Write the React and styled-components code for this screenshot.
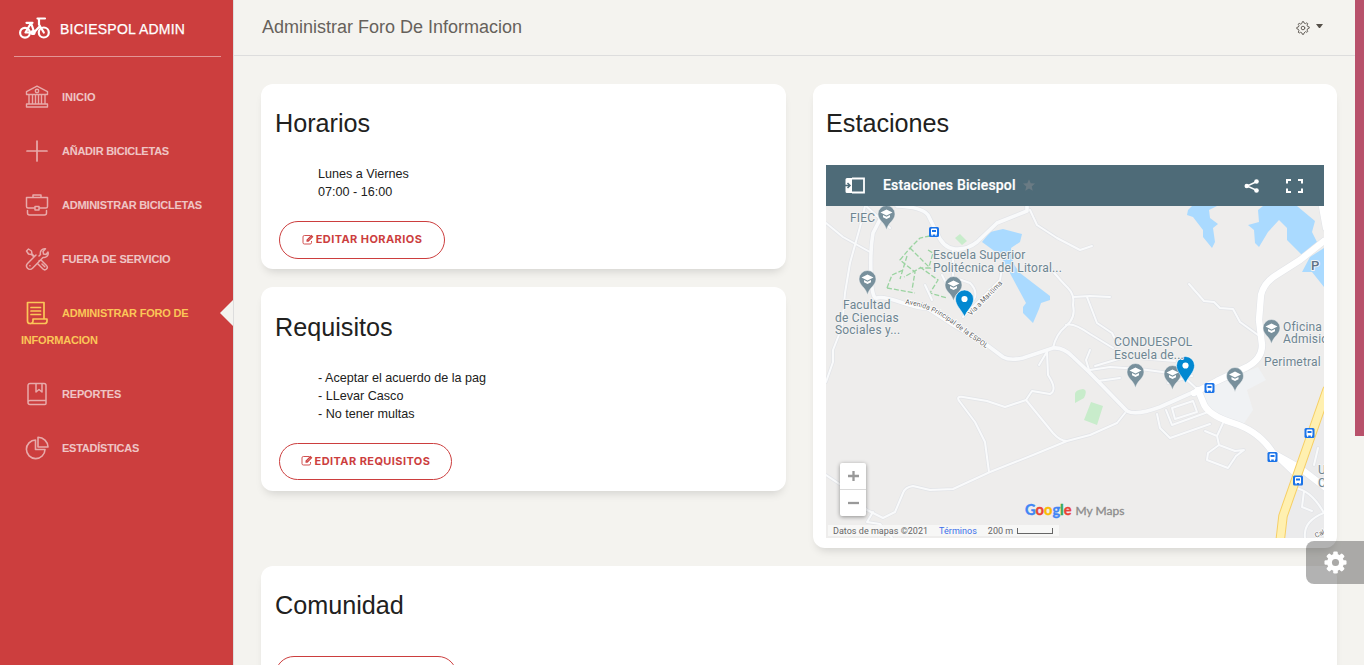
import React from "react";
import styled, { createGlobalStyle, css } from "styled-components";

const GlobalStyle = createGlobalStyle`
  * { box-sizing: border-box; }
  html, body { margin: 0; padding: 0; overflow: hidden; }
  body { font-family: "Liberation Sans", Arial, sans-serif; color: #212120; background: #f4f3ef; }
`;

const Page = styled.div`
  position: relative;
  display: flex;
  width: 1364px;
  height: 665px;
  overflow: hidden;
  background: #f4f3ef;
`;

const Sidebar = styled.aside`
  flex: none;
  width: 234px;
  background: #cc3e3e;
  border-right: 1px solid #dddddd;
`;

const Brand = styled.div`
  display: flex;
  align-items: center;
  height: 57px;
  margin: 0 12px 0 14px;
  padding: 2px 0 0 4px;
  border-bottom: 1px solid rgba(255, 255, 255, 0.45);
  color: #fff;
  font-size: 14px;
  letter-spacing: 0.24px;
  white-space: nowrap;
  -webkit-text-stroke: 0.25px #fff;

  svg { flex: none; width: 34px; height: 26px; margin: -2px 8px 0 0; }
`;

const Nav = styled.nav`
  display: flex;
  flex-direction: column;
  gap: 27px;
  padding-top: 27px;
`;

const NavLink = styled.a`
  position: relative;
  display: block;
  padding: 0 30px 0 21px;
  font-size: 11px;
  font-weight: 700;
  line-height: 27px;
  letter-spacing: ${(p) => p.$track || "-0.24px"};
  color: ${(p) => (p.$active ? "#fbc658" : "#fff")};
  opacity: ${(p) => (p.$active ? 1 : 0.7)};

  svg { float: left; width: 24px; height: 24px; margin: 1px 13.5px 0 3.5px; opacity: ${(p) => (p.$active ? 1 : 0.8)}; }

  ${(p) =>
    p.$active &&
    css`
      &::after {
        content: "";
        position: absolute;
        right: 0;
        top: -0.5px;
        border-top: 13.5px solid transparent;
        border-bottom: 13.5px solid transparent;
        border-right: 13.5px solid #f4f3ef;
      }
    `}
`;

const Main = styled.main`
  flex: 1;
  min-width: 0;
`;

const TopBar = styled.header`
  display: flex;
  align-items: center;
  justify-content: space-between;
  height: 56px;
  padding: 0 32px 2px 28px;
  border-bottom: 1px solid #dddddd;
  color: #66615b;
`;

const PageTitle = styled.div`
  font-size: 18px;
  line-height: 28px;
`;

const Settings = styled.div`
  display: flex;
  gap: 6px;
  padding-top: 3px;

  svg { width: 14px; height: 14px; }
`;

const Caret = styled.i`
  margin-top: 3px;
  width: 7px;
  height: 4px;
  border-left: 3.5px solid transparent;
  border-right: 3.5px solid transparent;
  border-top: 4px solid #555049;
`;

const Content = styled.div`
  display: flex;
  flex-direction: column;
  gap: 18px;
  padding: 28px 18px 0 27px;
`;

const Columns = styled.div`
  display: grid;
  grid-template-columns: 525px 524px;
  gap: 27px;
  align-items: start;
`;

const Stack = styled.div`
  display: flex;
  flex-direction: column;
  gap: 18px;
`;

const Card = styled.section`
  height: ${(p) => p.$height}px;
  padding: 24px 13px 0 14px;
  border-radius: 12px;
  background: #fff;
  box-shadow: 0 6px 10px -4px rgba(0, 0, 0, 0.15);
  ${(p) => p.$map && "padding-left: 13px;"}
`;

const CardTitle = styled.h2`
  margin: 0;
  padding-top: ${(p) => p.$offset || 0}px;
  font-size: 25.2px;
  font-weight: 400;
  line-height: 30px;
`;

const Lines = styled.div`
  margin: ${(p) => p.$top}px 0 0 43px;
  font-size: 12.6px;
  line-height: 18px;
`;

const EditButton = styled.button`
  display: flex;
  align-items: center;
  justify-content: center;
  gap: 2px;
  width: ${(p) => p.$width}px;
  height: ${(p) => p.$height || 38}px;
  margin: ${(p) => p.$margin};
  padding: 0 0 2px;
  border: 1px solid #cc3e3e;
  border-radius: 30px;
  background: transparent;
  color: #cc3e3e;
  font-family: Inter, sans-serif;
  font-size: 11px;
  font-weight: 650;
  letter-spacing: ${(p) => p.$track || "0.42px"};
  white-space: nowrap;

  svg { flex: none; width: 12px; height: 11px; }
`;

const MapFrame = styled.div`
  position: relative;
  width: 498px;
  height: 373px;
  margin-top: 27px;
  overflow: hidden;
  font-family: Roboto, sans-serif;
`;

const MapHeader = styled.div`
  display: flex;
  align-items: center;
  height: 41px;
  padding: 0 20px 1px 18px;
  background: #4e6b78;
  color: #fff;
`;

const MapTitle = styled.span`
  margin: 0 6px 0 17px;
  font-size: 14px;
  font-weight: 500;
  letter-spacing: 0.16px;
  -webkit-text-stroke: 0.2px #fff;
`;

const MapActions = styled.div`
  display: flex;
  gap: 25px;
  margin-left: auto;
  padding-top: 2px;
`;

const MapCanvas = styled.svg`
  display: block;
  width: 498px;
  height: 332px;
  background: #eeedec;
`;

const ZoomControl = styled.div`
  position: absolute;
  left: 14px;
  bottom: 22px;
  display: flex;
  flex-direction: column;
  width: 26px;
  border-radius: 2px;
  background: #fff;
  box-shadow: 0 1px 4px rgba(0, 0, 0, 0.4);
`;

const ZoomButton = styled.span`
  display: grid;
  place-items: center;
  height: 26px;

  & + & { height: 27px; border-top: 1px solid #d9d9d9; }
`;

const Attribution = styled.div`
  position: absolute;
  left: 2px;
  bottom: 2px;
  display: flex;
  align-items: center;
  width: 231px;
  height: 11px;
  padding-left: 5px;
  background: rgba(248, 248, 248, 0.85);
  color: #666;
  font-size: 9px;
  letter-spacing: 0.02px;
  white-space: nowrap;

  a { margin: 0 11px 0 11px; color: #3b6fea; }
`;

const ScaleBar = styled.i`
  width: 36px;
  height: 6px;
  margin-left: 4px;
  border: 1px solid #666;
  border-top: 0;
`;

const MapsLogo = styled.div`
  position: absolute;
  left: 199px;
  top: 336px;
  display: flex;
  align-items: baseline;
  font-family: Lato, sans-serif;
  font-size: 14.6px;
  font-weight: 700;
  line-height: 18px;
  white-space: nowrap;

  small { margin-left: 4px; color: #8b8b8b; font: 400 12px Lato, sans-serif; -webkit-text-stroke: 0.3px #8b8b8b; }
`;

const Letter = styled.span`
  color: ${(p) => p.$color};
  -webkit-text-stroke: 0.4px ${(p) => p.$color};
`;

const ScrollThumb = styled.div`
  flex: none;
  width: 9px;
  height: 436px;
  background: #b8516b;
`;

const FloatingSettings = styled.div`
  position: absolute;
  right: 0;
  top: 541px;
  display: flex;
  align-items: center;
  width: 58px;
  height: 43px;
  padding: 0 0 1px 17.5px;
  border-radius: 8px 0 0 8px;
  background: rgba(0, 0, 0, 0.3);

  svg { width: 23px; height: 23px; }
`;

const stroke = { fill: "none", stroke: "currentColor", strokeLinejoin: "round", strokeLinecap: "round" };

const BikeIcon = () => (
  <svg viewBox="18 15 34 26" {...stroke} strokeWidth="2.2">
    <circle cx="25" cy="32.800" r="4.900" />
    <circle cx="43.800" cy="32.500" r="5" />
    <path d="M26.500 22.800h6M31 23l-5.500 9.500h8.500l6-6.500M31 23l3 8.500M37.500 18.500h7.500M39 18.500v6l4.800 8" />
    <circle cx="33" cy="32.500" r="1.500" fill="currentColor" />
  </svg>
);

const BankIcon = () => (
  <svg viewBox="0 0 24 24" {...stroke} strokeWidth="1.400">
    <path d="M1.500 6.600 12 1.200l10.500 5.400V9.500h-21zM1.500 19h21v3h-21zM4 9.500V19M7.500 9.500V19M10.500 9.500V19M13.500 9.500V19M16.500 9.500V19M20 9.500V19" />
    <circle cx="12" cy="6" r="1.700" />
  </svg>
);

const PlusIcon = () => (
  <svg viewBox="0 0 24 24" {...stroke} strokeWidth="1.700"><path d="M12 2v20M2 12h20" /></svg>
);

const BriefcaseIcon = () => (
  <svg viewBox="0 0 24 24" {...stroke} strokeWidth="1.500">
    <path d="M8 4.500V2h8v2.500M10 15H3a1.500 1.500 0 0 1-1.500-1.500v-9h21v9A1.500 1.500 0 0 1 21 15h-7M2.500 17.500V20a2 2 0 0 0 2 2h15a2 2 0 0 0 2-2v-2.500M10 13.500h4v3.500h-4z" />
  </svg>
);

const ToolsIcon = () => (
  <svg viewBox="0 0 24 24" {...stroke} strokeWidth="1.500">
    <path d="M9.500 9.500 7 7 6.500 4 3.500 2 1.500 4l2 3 3 .500 2.500 2.500M14 9l1.500-1.500c-.800-3 1.500-6.300 5-5.700L18 4.500l.500 2.500 2.500.500 2-2.500c1 3.500-2 6.200-5 5.400L7.500 21.200c-1.500 1.500-3.700 1.300-5 0-1.300-1.400-1.300-3.300 0-4.700L11 8M14 14l2-1 5.500 5.500c1 1 1 2.500 0 3.500s-2.500 1-3.500 0L12.500 16.500M17 17l2.800 2.800" />
    <path d="M4.900 18.800h.100" />
  </svg>
);

const PaperIcon = () => (
  <svg viewBox="0 0 24 24" {...stroke} strokeWidth="1.700">
    <path d="M19 18V1.500H2.500V20A2.500 2.500 0 0 0 5 22.500h14.500A2.500 2.500 0 0 0 22 20v-2H8v2a2.500 2.500 0 0 1-3 2.500M6 6.500h9.500M6 10h9.500M6 13.500h9.500" />
  </svg>
);

const BookIcon = () => (
  <svg viewBox="0 0 24 24" {...stroke} strokeWidth="1.500">
    <path d="M21 18.500v-15a2 2 0 0 0-2-2H5a2 2 0 0 0-2 2v17A2 2 0 0 0 5 22.500h15a1 1 0 0 0 1-1v-3H5a2 2 0 0 0-2 2M11 1.500V10l3-2.500L17 10V1.500" />
  </svg>
);

const PieIcon = () => (
  <svg viewBox="0 0 24 24" {...stroke} strokeWidth="1.600">
    <path d="M10.500 4a9.300 9.300 0 1 0 9.500 9.500h-9.500zM13 1.200v9.800h10A10 10 0 0 0 13 1.200z" />
  </svg>
);

const EditIcon = () => (
  <svg viewBox="0 0 12 11" fill="none" stroke="currentColor" strokeWidth=".9">
    <path d="M8.500 1.500H2.400A1.400 1.400 0 0 0 1 2.900v5.700A1.400 1.400 0 0 0 2.400 10h5.700a1.400 1.400 0 0 0 1.400-1.400V7" />
    <path d="M4.500 7.700V5.700L9.400.8l2 2-4.900 4.900z" fill="currentColor" stroke="none" />
    <path d="m6 6.300 3.500-3.500" stroke="#fff" strokeWidth=".4" />
  </svg>
);

const GearOutline = () => (
  <svg viewBox="0 0 14 14" {...stroke} strokeWidth="1">
    <path d="m6 2 .4-1.400h1.200L8 2l1.500.6 1.300-.8 1 .9-.8 1.400.6 1.400 1.600.4v1.300l-1.500.5-.7 1.400.8 1.300-1 .9-1.300-.7L8 12l-.4 1.400H6.400L6 12l-1.500-.7-1.300.8-1-1 .8-1.300L2.400 8.300.8 7.800V6.400L2.400 6l.6-1.500-.8-1.300 1-1 1.300.8z" />
    <circle cx="7" cy="7" r="1.800" />
  </svg>
);

const GearSolid = () => (
  <svg viewBox="0 0 24 24">
    <g fill="#fff">
      <circle cx="12" cy="12" r="8.800" />
      {[0, 45, 90, 135].map((a) => (
        <rect key={a} x="9.600" y=".5" width="4.800" height="23" rx="1.300" transform={`rotate(${a} 12 12)`} />
      ))}
    </g>
    <circle cx="12" cy="12" r="3.700" fill="#aaa9a7" />
  </svg>
);

const thinRoads = [
  "M865 206 860 227 850 263 845 293 842 327 833 350V362L826 382",
  "M826 223 843 237 870 252",
  "M866 206 890 228",
  "M953 248V277L970 283Q977 290 975 297L963 317 1000 280 1002 268",
  "M1030 210 1037 225 1057 238 1080 250 1092 246",
  "M1053 348Q1056 334 1066 326T1073 305Q1075 295 1068 288T1050 268M1073 297 1090 296 1110 297M1087 297 1097 323 1112 333 1117 343M1066 325Q1073 322 1090 334L1113 348",
  "M1189 284 1204 301 1214 302 1220 308 1233 309 1240 322 1258 335",
  "M1047 352 1048 375Q1058 390 1050 394L1032 391 1026 400 1005 407 987 401 963 397Q955 396 960 402L975 422 985 442 989 472",
  "M1026 400 1053 433Q1060 441 1067 441L1033 455 990 472 953 489 930 490 913 486Q905 487 903 493L895 512 883 518 867 510M1067 441 1090 435 1117 423 1125 413",
  "M873 512 867 522 880 524 892 538M826 475 850 491 867 510",
  "M1090 373 1086 360 1090 350M1090 370 1110 367 1140 369 1192 376M1095 366 1125 357 1175 361M1098 381 1120 378M1168 383 1185 378 1198 390",
  "M1157 414 1160 428 1170 438 1210 424M1166 410 1172 425 1208 412M1172 408 1193 401 1197 412 1175 419Z",
  "M1223 423 1217 436 1205 431M1217 436 1219 445 1208 453 1207 460 1228 468 1236 456 1244 450 1235 451 1219 445",
  "M1048 350 1039 365",
  "M1318 448 1314 465M1304 491 1302 507 1312 511M1295 488Q1311 490 1324 513 1303 521 1305 538",
  "M925 285 932 300M942 275 951 293",
];

const mainRoads = [
  "M897 206Q922 207 928 215L937 233Q943 248 955 249T977 242L997 223 1027 211V206",
  "M887 206 873 233Q870 250 871 275T877 298 903 303 927 308L953 325 987 345 1003 357Q1010 361 1023 358L1053 348Q1063 347 1072 356L1090 373 1127 411Q1136 416 1160 407L1198 390",
];

const wideRoads = [
  "M1194 393 1217 381 1247 367Q1262 359 1262 345L1259 320 1261 295Q1264 282 1278 274L1300 260 1324 241M1322 206 1326 228",
  "M1198 390 1203 402Q1207 415 1233 423T1273 453L1300 468 1326 488M1275 454 1297 475",
];

const trails =
  "M930 236 920 238 910 248 900 260 915 272 912 290M910 248 930 268 920 268 904 277M887 288 892 275 903 270M887 288 915 293M920 267 938 280 930 293 947 298M907 256 900 279M928 250 933 253 929 267";

const campusPins = [[886.5, 214.5], [867.5, 279.5], [953.5, 285.5], [1135.5, 372.5], [1172.5, 374.5], [1235, 376.5], [1271.5, 328.5]];
const stationPins = [[964.5, 300.5], [1185.5, 367]];
const busStops = [[934, 232], [1209.5, 388], [1309.5, 433], [1272.5, 457], [1298, 480.5]];

const labels = [
  [850, 222, "FIEC"],
  [933, 259, "Escuela Superior"],
  [933, 272, "Politécnica del Litoral..."],
  [843, 309, "Facultad"],
  [835, 322, "de Ciencias"],
  [835, 334, "Sociales y..."],
  [1114, 346, "CONDUESPOL"],
  [1114, 359, "Escuela de..."],
  [1283, 331, "Oficina de"],
  [1283, 343, "Admisiones"],
  [1264, 366, "Perimetral"],
];

const MapDrawing = () => (
  <MapCanvas viewBox="826 206 498 332">
    <path fill="#f0f2f4" d="M1200 392 1238 375 1258 367 1266 380 1247 390 1253 410 1243 425 1213 415Z" />
    <path fill="#ebebec" d="M1324 400 1276 540H1324Z" />
    <g fill="#aadaff">
      <path d="M982 242 990 232 1003 229 1022 234 1020 242 1011 248 1013 263 1020 273 1033 283 1050 296 1050 300 1041 303 1039 309 1033 323 1023 313V307L1026 303 1012 277 1002 258 993 250Z" />
      <path d="M1192 206H1217L1209 210 1210 218 1218 224 1213 228 1215 242 1212 248 1203 237V230L1193 217 1187 215 1188 210Z" />
      <path d="M1263 206H1297L1315 221 1312 232 1317 242 1302 255 1287 240V228L1279 220 1268 232 1259 247 1255 243 1254 230 1248 225 1259 222 1258 210Z" />
      <path d="M1324 248 1310 257 1302 272H1312L1324 287Z" />
    </g>
    <path fill="#c8eccb" d="M1075 394Q1075 390 1083 389 1088 390 1084 398L1075 403ZM1091 402 1103 406 1097 425 1084 420ZM955 238 960 234 967 241 962 245Z" />
    <path fill="none" stroke="#9ad3a0" strokeWidth="1.300" strokeDasharray="5 2" d={trails} />
    <g fill="none" strokeLinejoin="round" strokeLinecap="round">
      <g stroke="#e2e4e8">
        {thinRoads.map((d) => <path key={d} d={d} strokeWidth="3.400" />)}
        {mainRoads.map((d) => <path key={d} d={d} strokeWidth="5" />)}
        {wideRoads.map((d) => <path key={d} d={d} strokeWidth="7.500" />)}
      </g>
      <g stroke="#f9fafb">
        {thinRoads.map((d) => <path key={d} d={d} strokeWidth="2" />)}
        {mainRoads.map((d) => <path key={d} d={d} strokeWidth="3.600" />)}
        {wideRoads.map((d) => <path key={d} d={d} strokeWidth="6.400" stroke="#fff" />)}
      </g>
      <path d="M1327 390 1283 516 1280 542" stroke="#f6cf65" strokeWidth="9.500" />
      <path d="M1327 390 1283 516 1280 542" stroke="#fff0b0" strokeWidth="7.500" />
    </g>
    {busStops.map(([x, y]) => (
      <g key={x} transform={`translate(${x} ${y})`}>
        <rect x="-5" y="-5" width="10" height="10" rx="1.500" fill="#1a73e8" />
        <path d="M-3-2.500q0-1 1-1H2q1 0 1 1V2.500H2.500V3.700H1.300V2.500h-2.600V3.700h-1.200V2.500H-3z" fill="#fff" />
        <path d="M-2-2H2V0H-2z" fill="#1a73e8" />
      </g>
    ))}
    {campusPins.map(([x, y]) => (
      <g key={x} transform={`translate(${x} ${y})`}>
        <path d="M0 15.500C-1.500 8-8.500 6-8.500-.500a8.500 8.500 0 0 1 17 0C8.500 6 1.500 8 0 15.500Z" fill="#78909c" stroke="#f5f5f5" strokeWidth=".5" />
        <path d="m0-5 6 3-6 3-6-3zM-3.500.500 0 2.200 3.500.500v2.300L0 4.500l-3.500-1.700z" fill="#fff" />
      </g>
    ))}
    {stationPins.map(([x, y]) => (
      <g key={x} transform={`translate(${x} ${y})`}>
        <path d="M0 16C-3 9.500-9 5-9-1.500a9 9 0 0 1 18 0C9 5 3 9.500 0 16Z" fill="#0288d1" stroke="#fff" strokeWidth=".5" />
        <circle cy="-1.500" r="3.100" fill="#fff" />
      </g>
    ))}
    <g fontFamily="Roboto, sans-serif" fontSize="12" letterSpacing=".2" fill="#6e8591" stroke="#f3f3f3" strokeWidth="2" paintOrder="stroke" strokeLinejoin="round">
      {labels.map(([x, y, text]) => <text key={text} x={x} y={y}>{text}</text>)}
      <text x="1311" y="270" fontSize="13" fontWeight="500" fill="#5f7288">P</text>
      <text x="1318" y="474">U</text>
      <text x="1318" y="487">C</text>
    </g>
    <defs>
      <path id="avenida" d="M905 304Q930 307 951 323T990 351" />
      <path id="maritima" d="M971 316 1009 277" />
    </defs>
    <g fontFamily="Roboto, sans-serif" fontSize="7" fill="#5f5f5f" stroke="#fff" strokeWidth="1.500" paintOrder="stroke">
      <text><textPath href="#avenida">Avenida Principal de la ESPOL</textPath></text>
      <text><textPath href="#maritima">Vía a Marítima</textPath></text>
      <text transform="translate(1316 538) rotate(-25)">Cal</text>
    </g>
  </MapCanvas>
);

const navItems = [
  { label: "INICIO", Icon: BankIcon, track: "0px" },
  { label: "AÑADIR BICICLETAS", Icon: PlusIcon },
  { label: "ADMINISTRAR BICICLETAS", Icon: BriefcaseIcon },
  { label: "FUERA DE SERVICIO", Icon: ToolsIcon, track: "-0.16px" },
  { label: "ADMINISTRAR FORO DE INFORMACION", Icon: PaperIcon, active: true, track: "-0.2px" },
  { label: "REPORTES", Icon: BookIcon, track: "-0.18px" },
  { label: "ESTADÍSTICAS", Icon: PieIcon },
];

const logoLetters = [["G", "#4285f4"], ["o", "#ea4335"], ["o", "#fbbc05"], ["g", "#4285f4"], ["l", "#34a853"], ["e", "#ea4335"]];

export default function App() {
  return (
    <Page>
      <GlobalStyle />
      <Sidebar>
        <Brand><BikeIcon />BICIESPOL ADMIN</Brand>
        <Nav>
          {navItems.map(({ label, Icon, active, track }) => (
            <NavLink key={label} $active={active} $track={track}><Icon />{label}</NavLink>
          ))}
        </Nav>
      </Sidebar>
      <Main>
        <TopBar>
          <PageTitle>Administrar Foro De Informacion</PageTitle>
          <Settings><GearOutline /><Caret /></Settings>
        </TopBar>
        <Content>
          <Columns>
            <Stack>
              <Card $height={185}>
                <CardTitle>Horarios</CardTitle>
                <Lines $top={27}>Lunes a Viernes<br />07:00 - 16:00</Lines>
                <EditButton $width={166} $margin="20px 0 0 4px"><EditIcon />EDITAR HORARIOS</EditButton>
              </Card>
              <Card $height={204}>
                <CardTitle $offset={1}>Requisitos</CardTitle>
                <Lines $top={27}>- Aceptar el acuerdo de la pag<br />- LLevar Casco<br />- No tener multas</Lines>
                <EditButton $width={173} $height={37} $margin="20px 0 0 4px"><EditIcon />EDITAR REQUISITOS</EditButton>
              </Card>
            </Stack>
            <Card $height={464} $map>
              <CardTitle>Estaciones</CardTitle>
              <MapFrame>
                <MapHeader>
                  <svg width="22" height="17" viewBox="0 0 22 17">
                    <path d="M8 1.500h12v14H8" fill="none" stroke="#fff" strokeWidth="1.800" />
                    <path d="M3 1h5v15H3a1.500 1.500 0 0 1-1.500-1.500v-12A1.500 1.500 0 0 1 3 1z" fill="#fff" />
                    <path d="M0 8.500h5M3.500 6 6 8.500 3.500 11" fill="none" stroke="#4e6b78" strokeWidth="1.500" />
                  </svg>
                  <MapTitle>Estaciones Biciespol</MapTitle>
                  <svg width="14" height="14" viewBox="0 0 24 24">
                    <path fill="#6a7b84" d="m12 2 2.900 6.900 7.400.600-5.600 4.900 1.700 7.300-6.400-3.900-6.400 3.900 1.700-7.300L1.700 9.500l7.400-.600z" />
                  </svg>
                  <MapActions>
                    <svg width="16" height="16" viewBox="0 0 16 16">
                      <path d="M13 3.500 3 8l10 4.500" fill="none" stroke="#fff" strokeWidth="1.400" />
                      <g fill="#fff"><circle cx="12.500" cy="3.500" r="2.300" /><circle cx="2.800" cy="8" r="2.300" /><circle cx="12.500" cy="12.500" r="2.300" /></g>
                    </svg>
                    <svg width="19" height="16" viewBox="0 0 19 16">
                      <path d="M2 5.500V2h4M13 2h4v3.500M17 10.500V14h-4M6 14H2v-3.500" fill="none" stroke="#fff" strokeWidth="2" />
                    </svg>
                  </MapActions>
                </MapHeader>
                <MapDrawing />
                <ZoomControl>
                  <ZoomButton><svg width="12" height="12" viewBox="0 0 12 12"><path d="M6.500 1v10M1 6h11" stroke="#999" strokeWidth="2.300" /></svg></ZoomButton>
                  <ZoomButton><svg width="12" height="12" viewBox="0 0 12 12"><path d="M1 6h11" stroke="#999" strokeWidth="2.300" /></svg></ZoomButton>
                </ZoomControl>
                <MapsLogo>
                  {logoLetters.map(([ch, color], i) => <Letter key={i} $color={color}>{ch}</Letter>)}
                  <small>My Maps</small>
                </MapsLogo>
                <Attribution>Datos de mapas ©2021<a>Términos</a>200 m<ScaleBar /></Attribution>
              </MapFrame>
            </Card>
          </Columns>
          <Card $height={160}>
            <CardTitle>Comunidad</CardTitle>
            <EditButton $width={182} $margin="36px 0 0 0" />
          </Card>
        </Content>
      </Main>
      <ScrollThumb />
      <FloatingSettings><GearSolid /></FloatingSettings>
    </Page>
  );
}
